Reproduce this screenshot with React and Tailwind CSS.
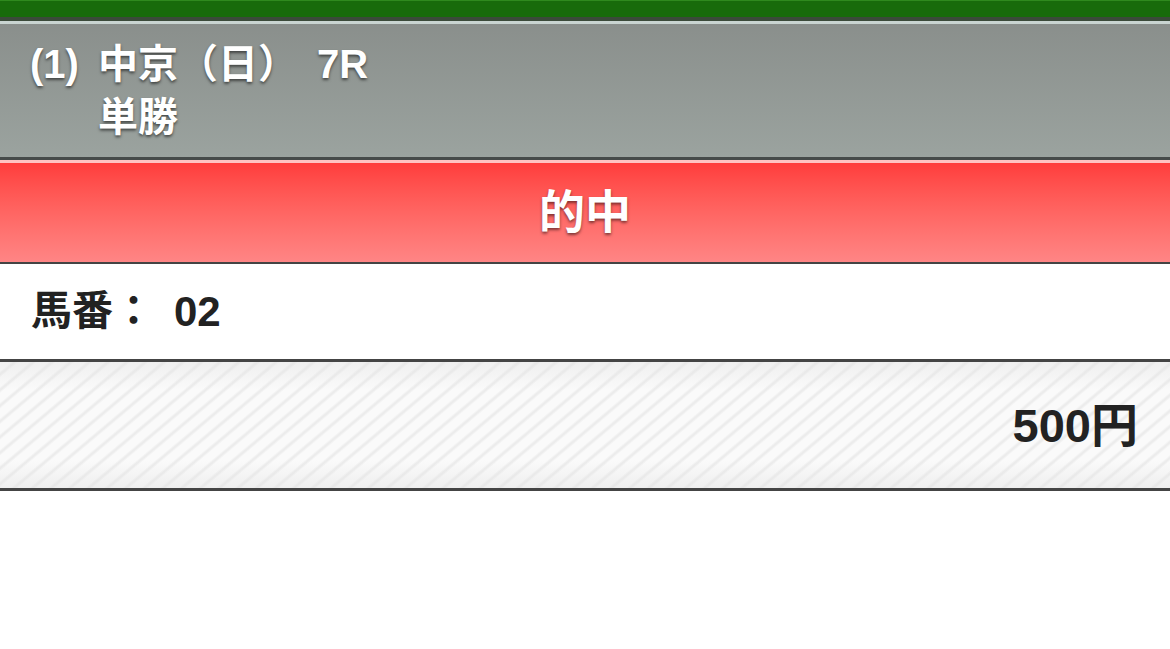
export default function App() {
  const font = { fontFamily: '"Liberation Sans", "Noto Sans CJK JP", sans-serif' };

  return (
    <div className="w-[1170px] min-h-[649px] bg-white" style={font}>
      {/* top green bar */}
      <div className="h-[17px] bg-[#186b0b] border-t border-[#2f8a1e]" />
      <div className="h-[4px] bg-[#3b4a3a]" />
      <div className="h-[3px] bg-[#c9d4d1]" />

      {/* race header */}
      <div className="h-[133px] bg-linear-to-b from-[#8a8f8c] to-[#9ba39f] flex pt-[14px] pl-[30px] text-white font-bold text-[40px] leading-[53px] [text-shadow:0_2px_3px_rgba(0,0,0,0.55)]">
        <div className="w-[68px] shrink-0">(1)</div>
        <div>
          <div className="flex items-baseline">
            <span>中京（日）</span>
            <span className="ml-[19px]">7R</span>
          </div>
          <div>単勝</div>
        </div>
      </div>
      <div className="h-[3px] bg-[#464b4a]" />

      {/* result band */}
      <div className="h-[3px] bg-[#ffc2c2]" />
      <div className="h-[99px] bg-linear-to-b from-[#ff3c3c] to-[#ff8585] flex items-center justify-center text-white font-bold text-[46px] [text-shadow:0_2px_3px_rgba(0,0,0,0.5)]">
        的中
      </div>
      <div className="h-[2px] bg-[#444]" />

      {/* horse number */}
      <div className="h-[95px] flex items-center pl-[31px] text-[#222] font-bold text-[41px]">
        <span>馬番：</span>
        <span className="ml-[20px] text-[42px]">02</span>
      </div>
      <div className="h-[3px] bg-[#444]" />

      {/* payout */}
      <div className="h-[126px] flex items-center justify-end pr-[32px] text-[#222] font-bold text-[47px] bg-[linear-gradient(to_bottom,rgba(228,228,228,0.5),rgba(255,255,255,0)_22%,rgba(255,255,255,0)_78%,rgba(228,228,228,0.5)),repeating-linear-gradient(140deg,#fafafa_0px,#fafafa_7px,#ececec_9px,#ececec_10px,#fafafa_12px)]">
        <span className="mt-[3px]">500円</span>
      </div>
      <div className="h-[3px] bg-[#444]" />
    </div>
  );
}
